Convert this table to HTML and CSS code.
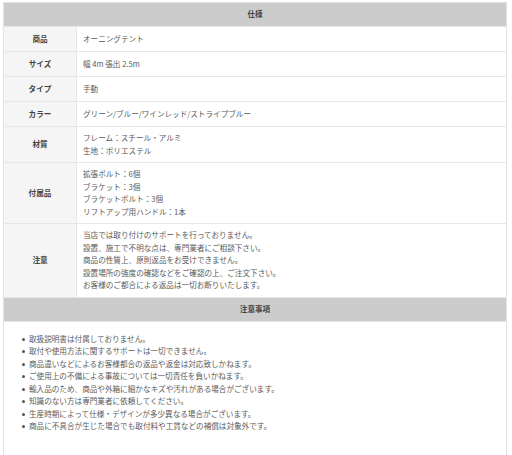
FILE: index.html
```html
<!DOCTYPE html>
<html lang="ja">
<head>
<meta charset="utf-8">
<link rel="stylesheet" href="styles.css">
</head>
<body>
<div class="wrap">
  <table class="spec">
    <tr><th class="head" colspan="2">仕様</th></tr>
    <tr class="one"><th class="label">商品</th><td>オーニングテント</td></tr>
    <tr class="one"><th class="label">サイズ</th><td>幅 4m 張出 2.5m</td></tr>
    <tr class="one"><th class="label">タイプ</th><td>手動</td></tr>
    <tr class="one"><th class="label">カラー</th><td>グリーン/ブルー/ワインレッド/ストライプブルー</td></tr>
    <tr class="two"><th class="label">材質</th><td>フレーム：スチール・アルミ<br>生地：ポリエステル</td></tr>
    <tr class="multi"><th class="label">付属品</th><td>拡張ボルト：6個<br>ブラケット：3個<br>ブラケットボルト：3個<br>リフトアップ用ハンドル：1本</td></tr>
    <tr class="multi"><th class="label">注意</th><td>当店では取り付けのサポートを行っておりません。<br>設置、施工で不明な点は、専門業者にご相談下さい。<br>商品の性質上、原則返品をお受けできません。<br>設置場所の強度の確認などをご確認の上、ご注文下さい。<br>お客様のご都合による返品は一切お断りいたします。</td></tr>
    <tr><th class="head" colspan="2">注意事項</th></tr>
    <tr>
      <td class="notes" colspan="2">
        <ul class="list">
          <li>取扱説明書は付属しておりません。</li>
          <li>取付や使用方法に関するサポートは一切できません。</li>
          <li>商品違いなどによるお客様都合の返品や返金は対応致しかねます。</li>
          <li>ご使用上の不備による事故については一切責任を負いかねます。</li>
          <li>輸入品のため、商品や外箱に細かなキズや汚れがある場合がございます。</li>
          <li>知識のない方は専門業者に依頼してください。</li>
          <li>生産時期によって仕様・デザインが多少異なる場合がございます。</li>
          <li>商品に不具合が生じた場合でも取付料や工賃などの補償は対象外です。</li>
        </ul>
      </td>
    </tr>
  </table>
</div>
</body>
</html>
```
FILE: styles.css
```css
html, body {
  margin: 0;
  padding: 0;
  background: #fff;
}
.wrap {
  padding: 2px 5px 0 3px;
}
.spec {
  width: 504px;
  border-collapse: collapse;
  font-family: "Noto Sans CJK JP", "Noto Sans", sans-serif;
  font-size: 7.6px;
  line-height: 12.5px;
  color: #5a5a5a;
  border: 1px solid #e2e2e2;
}
.spec th, .spec td {
  padding: 5px 0 5px 6px;
  text-align: left;
  vertical-align: middle;
  border-bottom: 1px solid #e6e6e6;
}
.spec .head {
  background: #cccccc;
  text-align: center;
  font-weight: bold;
  color: #444;
  height: 13px;
  padding: 5px 0;
  border-bottom: 1px solid #e6e6e6;
}
.spec .label {
  width: 72px;
  padding: 5px 0;
  text-align: center;
  background: #f5f5f5;
  font-weight: bold;
  color: #444;
  border-right: 1px solid #e6e6e6;
}
.one th, .one td {
  height: 16px;
  padding-top: 4px;
  padding-bottom: 4px;
}
.one th.label {
  padding-top: 4px;
  padding-bottom: 4px;
}
.two th, .two td {
  padding-top: 5px;
  padding-bottom: 5px;
}
.spec .notes {
  padding: 11px 0 22px 0;
  border-bottom: 1px solid #e2e2e2;
}
.list {
  list-style: none;
  margin: 0;
  padding: 0 0 0 25px;
}
.list li {
  position: relative;
  line-height: 12.5px;
}
.list li::before {
  content: "";
  position: absolute;
  left: -7px;
  top: 5px;
  width: 3px;
  height: 3px;
  border-radius: 50%;
  background: #555;
}
```
